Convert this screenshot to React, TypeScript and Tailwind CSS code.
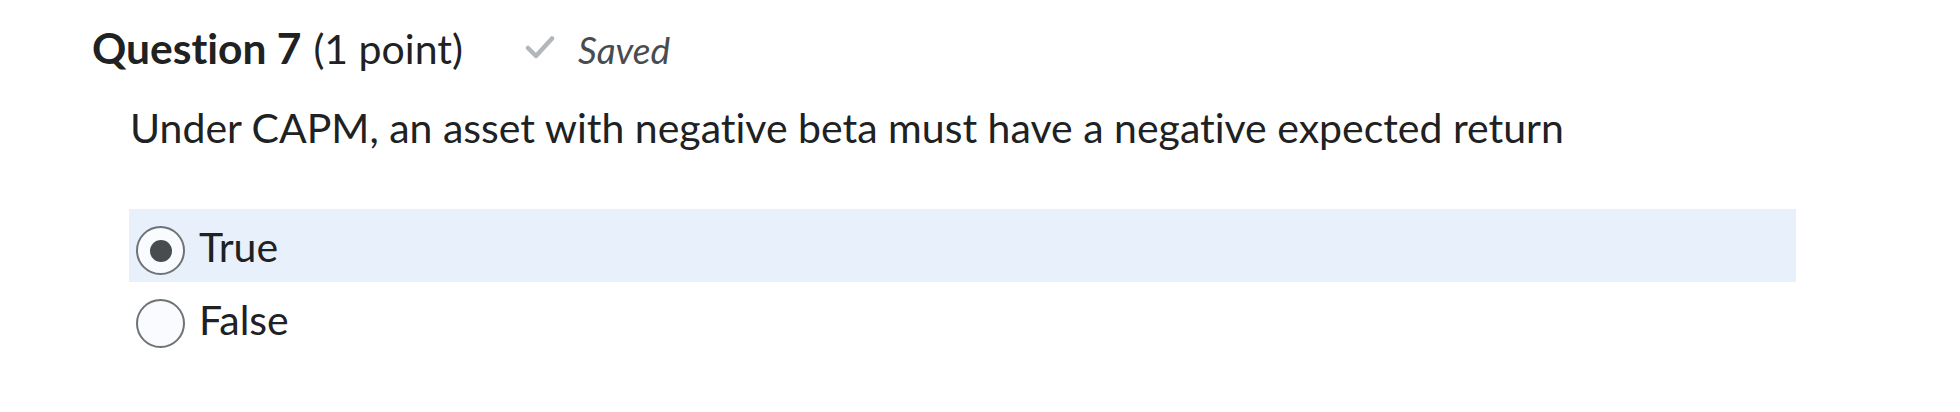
import React from "react";

const options = [
  { id: "t", label: "True", checked: true },
  { id: "f", label: "False", checked: false },
];

function Radio({ checked }: { checked: boolean }) {
  return (
    <span className="mt-[10px] flex h-[49px] w-[49px] shrink-0 items-center justify-center rounded-full border-2 border-[#6e7376] bg-[#f9fbff]">
      {checked && <span className="h-[22px] w-[22px] rounded-full bg-[#494c4e]" />}
    </span>
  );
}

export default function App() {
  return (
    <div className="min-h-[412px] w-[1960px] bg-white font-['Lato','Noto_Sans',sans-serif] text-[#202122] [font-variant-ligatures:none]">
      {/* encabezado */}
      <div className="flex items-baseline pl-[92px] pt-[24px] text-[41px] leading-[48px]">
        <span className="text-[42.5px] font-bold">Question 7</span>
        <span className="ml-[12px]">(1 point)</span>
        <svg className="ml-[62px] mt-[-4px] h-[24px] w-[30px] self-center" viewBox="0 0 30 24" fill="none">
          <path d="M3 13 L11 21 L27 3.5" stroke="#b1b7bb" strokeWidth="4.5" strokeLinecap="round" strokeLinejoin="round" />
        </svg>
        <span className="ml-[23px] text-[37px] italic text-[#494c4e]">Saved</span>
      </div>

      {/* enunciado */}
      <p className="mt-[30px] pl-[130px] text-[41px] leading-[48px]">
        Under CAPM, an asset with negative beta must have a negative expected return
      </p>

      {/* opciones */}
      <div className="ml-[129px] mt-[57px] w-[1667px]">
        {options.map((o) => (
          <label
            key={o.id}
            className={`flex h-[73px] items-center gap-[14px] pl-[7px] ${o.checked ? "bg-[#e8f1fb]" : ""}`}
          >
            <Radio checked={o.checked} />
            <span className="mt-[3px] text-[41px] leading-[48px]">{o.label}</span>
          </label>
        ))}
      </div>
    </div>
  );
}
